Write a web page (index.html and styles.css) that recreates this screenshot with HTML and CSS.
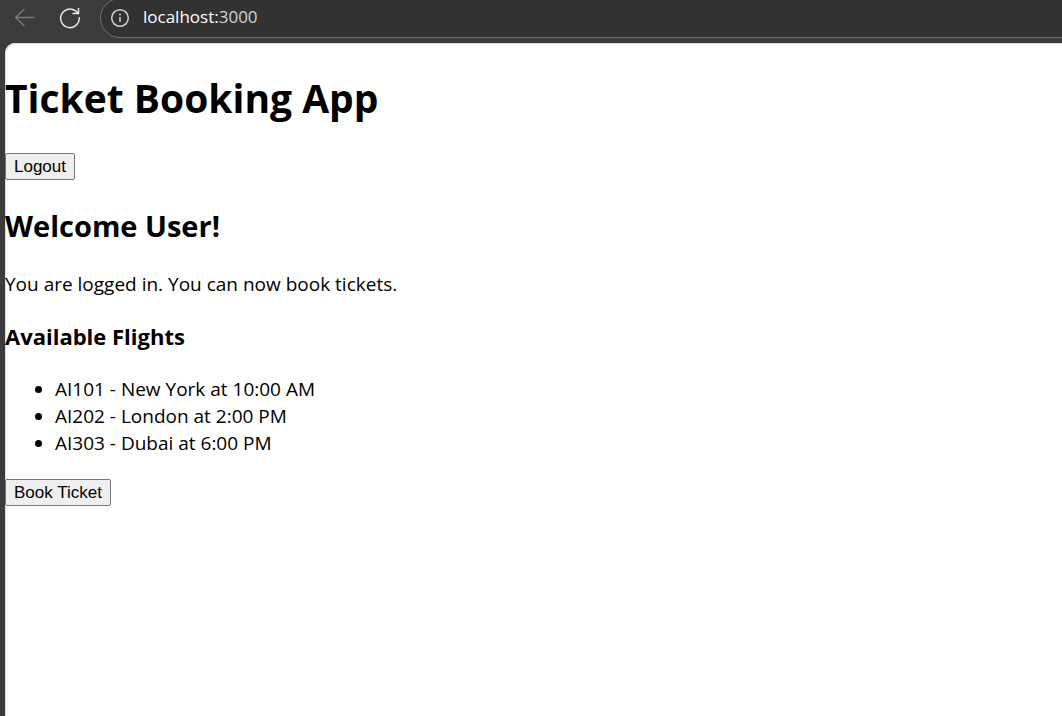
FILE: index.html
```html
<!DOCTYPE html>
<html lang="en">
<head>
<meta charset="utf-8">
<title>Ticket Booking App</title>
<link rel="stylesheet" href="styles.css">
</head>
<body>
<header class="toolbar">
  <button class="tool back" type="button" aria-label="Back" disabled>
    <svg width="22" height="20" viewBox="0 0 22 20" fill="none" stroke="currentColor" stroke-width="1.3"><path d="M20.500 9.500H1.500M10.500 1L1.500 9.500L10.500 18"/></svg>
  </button>
  <button class="tool reload" type="button" aria-label="Reload">
    <svg width="22" height="22" viewBox="0 0 22 22" fill="none" stroke="currentColor" stroke-width="1.500"><path d="M20.200 10.200A9.300 9.300 0 1 1 16.300 3.700L18.800 6M19.500 1V6.500H13.500"/></svg>
  </button>
  <div class="address">
    <button class="tool info" type="button" aria-label="Site information">
      <svg width="20" height="20" viewBox="0 0 20 20" fill="none" stroke="currentColor" stroke-width="1.500"><circle cx="10" cy="10" r="8.300"/><path d="M10 9V14"/><circle cx="10" cy="6.500" r="1" fill="currentColor" stroke="none"/></svg>
    </button>
    <span class="url">localhost:<span class="port">3000</span></span>
  </div>
</header>
<main class="page">
  <h1 class="title">Ticket Booking App</h1>
  <button class="action" type="button">Logout</button>
  <h2 class="welcome">Welcome User!</h2>
  <p class="message">You are logged in. You can now book tickets.</p>
  <h3 class="subtitle">Available Flights</h3>
  <ul class="flights">
    <li>AI101 - New York at 10:00 AM</li>
    <li>AI202 - London at 2:00 PM</li>
    <li>AI303 - Dubai at 6:00 PM</li>
  </ul>
  <button class="action" type="button">Book Ticket</button>
</main>
</body>
</html>
```
FILE: styles.css
```css
* { box-sizing: border-box; }
body {
  margin: 0;
  min-height: 100vh;
  display: flex;
  flex-direction: column;
  background: #3b3b3b;
  color: #000;
  font: 19px/27px "Segoe UI", "Open Sans", "Noto Sans", sans-serif;
}
.toolbar {
  display: flex;
  align-items: flex-start;
  height: 43px;
  padding-left: 14px;
  overflow: hidden;
}
.tool {
  display: flex;
  padding: 0;
  border: 0;
  background: none;
  color: #e8e8e8;
}
.back { margin-top: 8px; color: #7b7b7b; }
.reload { margin: 7px 19px 0 23px; }
.address {
  flex: 1;
  display: flex;
  align-items: center;
  gap: 13px;
  height: 40px;
  margin: -2px -24px 0 0;
  padding-left: 9px;
  border: 1px solid #707070;
  border-radius: 20px;
  background: #323232;
}
.info { color: #d0d0d0; }
.url { font-size: 17px; line-height: 24px; padding-bottom: 2px; color: #fff; }
.port { color: #d2d2d2; }
.page {
  flex: 1;
  margin-left: 5px;
  padding-top: 27px;
  border-top-left-radius: 10px;
  background: #fff;
  box-shadow: inset 1px 1px #dedede;
}
.title { margin: 0 0 27px; font-size: 39px; line-height: 56px; }
.welcome { margin: 25px 0; font-size: 29px; line-height: 41px; }
.message { margin: 0; }
.subtitle { margin: 22px 0 24px; font-size: 22px; line-height: 32px; }
.flights { margin: 0 0 22px; padding-left: 50px; }
.action {
  display: block;
  height: 27px;
  padding: 0 8px;
  border: 1px solid #767676;
  border-radius: 2px;
  background: #efefef;
  color: #000;
  font: 17px/24px "Liberation Sans", Arial, sans-serif;
}
```
